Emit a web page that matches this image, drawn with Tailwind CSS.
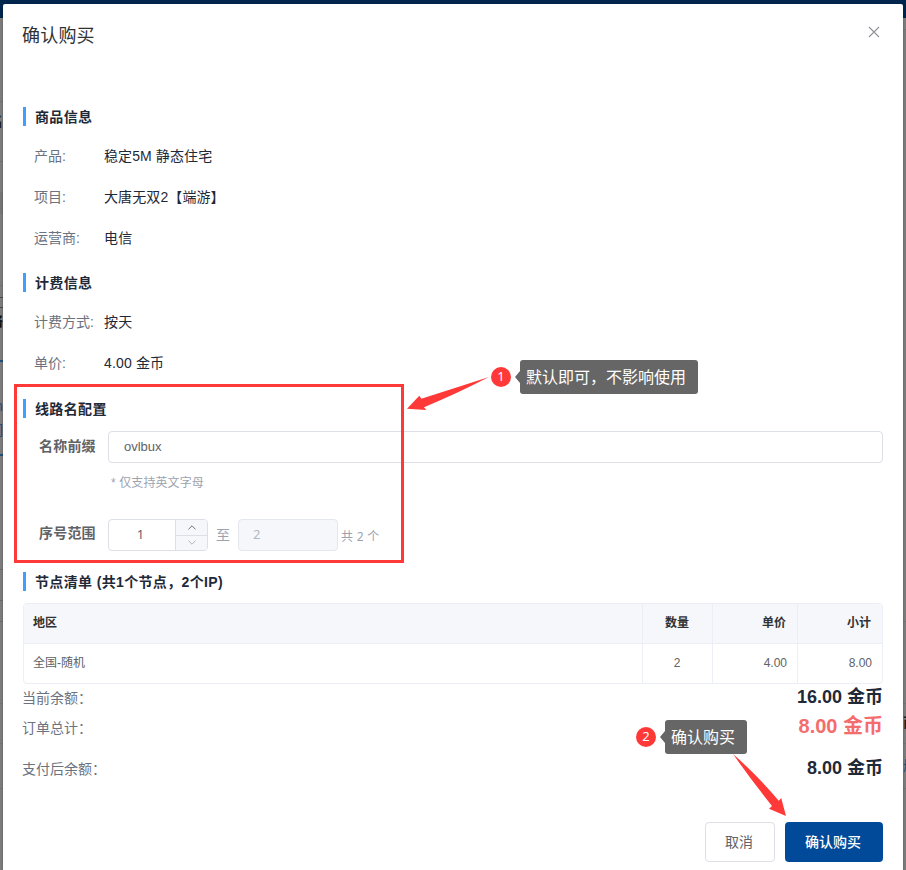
<!DOCTYPE html>
<html lang="zh-CN">
<head>
<meta charset="utf-8">
<title>确认购买</title>
<script src="https://cdn.jsdelivr.net/npm/@tailwindcss/browser@4"></script>
</head>
<body class="relative h-[870px] w-[906px] overflow-hidden bg-[#7e7e7e] font-['Liberation_Sans','Noto_Sans_CJK_SC',sans-serif] text-sm text-[#606266]">
<!-- dimmed page behind the dialog -->
<div class="absolute inset-x-0 top-0 h-[18px] bg-[#00264d]"></div>
<div class="absolute left-0 top-[18px] h-[852px] w-[3px] overflow-hidden">
  <div class="absolute top-[83px] h-px w-full bg-[#747474]"></div>
  <div class="absolute top-[93px] -left-[11px] text-sm font-bold leading-5 text-[#1b1b22]">名</div>
  <div class="absolute top-[143px] h-px w-full bg-[#747474]"></div>
  <div class="absolute top-[174px] h-[22px] w-full bg-[#777]"></div>
  <div class="absolute top-[267px] h-px w-full bg-[#747474]"></div>
  <div class="absolute top-[279px] h-[11px] w-full border-y border-[#4b4b4b]"></div>
  <div class="absolute top-[293px] -left-[11px] text-sm font-bold leading-5 text-[#111]">络</div>
  <div class="absolute top-[342px] h-[2px] w-full bg-[#204f80]"></div>
  <div class="absolute top-[378px] -left-[5px] text-sm leading-5 text-[#204f80]">n</div>
  <div class="absolute top-[402px] -left-[11px] text-sm leading-5 text-[#204f80]">们</div>
  <div class="absolute top-[436px] h-[2px] w-full bg-[#204f80]"></div>
  <div class="absolute top-[551px] h-px w-full bg-[#6c6c6c]"></div>
  <div class="absolute top-[582px] h-px w-full bg-[#6c6c6c]"></div>
  <div class="absolute top-[603px] h-px w-full bg-[#6c6c6c]"></div>
  <div class="absolute top-[685px] h-px w-full bg-[#747474]"></div>
  <div class="absolute top-[725px] h-px w-full bg-[#747474]"></div>
  <div class="absolute top-[770px] h-px w-full bg-[#747474]"></div>
</div>
<div class="absolute left-[903px] top-[18px] h-[852px] w-[3px] overflow-hidden">
  <div class="absolute top-[11px] h-px w-full bg-[#747474]"></div>
  <div class="absolute top-[603px] h-px w-full bg-[#747474]"></div>
  <div class="absolute top-[685px] h-px w-full bg-[#747474]"></div>
  <div class="absolute top-[694px] left-0 text-sm font-bold leading-5 text-[#1b1b22]">商</div>
  <div class="absolute top-[725px] h-px w-full bg-[#747474]"></div>
  <div class="absolute top-[737px] left-0 text-sm leading-5 text-[#204f80]">册</div>
  <div class="absolute top-[770px] h-px w-full bg-[#747474]"></div>
</div>

<!-- dialog -->
<main class="relative ml-[3px] h-[870px] w-[900px] pt-1">
 <div class="h-[866px] rounded-t-[2px] bg-white px-5 shadow-[0_1px_3px_rgba(0,0,0,0.3)]">
  <header class="flex h-[103px] items-start justify-between">
    <h1 class="pt-[17px] -ml-px text-lg leading-[30px] tracking-[0.2px] text-[#303133]">确认购买</h1>
    <svg class="mt-[22px] mr-[3px] size-3" viewBox="0 0 12 12" fill="none" stroke="#909399" stroke-width="1.1"><path d="M1 1L11 11M11 1L1 11"/></svg>
  </header>

  <h2 class="flex h-[19px] items-center border-l-3 border-[#409eff] pl-[9px] pt-px font-bold tracking-[0.35px] text-[#1f2937]">商品信息</h2>
  <dl class="mt-[9px] grid grid-cols-[70px_auto] auto-rows-[41px] items-center pl-[11px] text-[#1f2937]">
    <dt class="text-[#6b7280]">产品:</dt><dd class="tracking-[0.1px]">稳定5M 静态住宅</dd>
    <dt class="text-[#6b7280]">项目:</dt><dd class="tracking-[0.1px]">大唐无双2【端游】</dd>
    <dt class="text-[#6b7280]">运营商:</dt><dd class="tracking-[0.3px]">电信</dd>
  </dl>

  <h2 class="mt-[15px] flex h-[19px] items-center border-l-3 border-[#409eff] pl-[9px] pt-px font-bold tracking-[0.35px] text-[#1f2937]">计费信息</h2>
  <dl class="mt-[9px] grid grid-cols-[70px_auto] auto-rows-[41px] items-center pl-[11px] text-[#1f2937]">
    <dt class="text-[#6b7280]">计费方式:</dt><dd class="tracking-[0.3px]">按天</dd>
    <dt class="text-[#6b7280]">单价:</dt><dd class="tracking-[0.15px]">4.00 金币</dd>
  </dl>

  <h2 class="mt-4 flex h-[19px] items-center border-l-3 border-[#409eff] pl-[9px] pt-px font-bold tracking-[0.35px] text-[#1f2937]">线路名配置</h2>
  <div class="mt-[13px] flex h-8 items-center pl-4">
    <label class="w-[69px] pb-[3px] font-bold tracking-[0.2px]">名称前缀</label>
    <div class="flex h-8 flex-1 items-center rounded border border-[#dcdfe6] pl-[15px] text-[13px]">ovlbux</div>
  </div>
  <p class="mt-[10px] h-5 pl-[88px] text-xs leading-5 tracking-[0.1px] text-[#9ca3af]">* 仅支持英文字母</p>
  <div class="mt-[26px] flex h-8 items-center pl-4">
    <label class="w-[69px] pb-[5px] font-bold tracking-[0.2px]">序号范围</label>
    <div class="flex h-8 w-[100px] overflow-hidden rounded border border-[#dcdfe6]">
      <div class="flex flex-1 items-center justify-center pr-[3px] pb-0.5 font-['Noto_Sans','Noto_Sans_CJK_SC',sans-serif] text-[13px]">1</div>
      <div class="w-8 border-l border-[#dcdfe6] bg-[#f5f7fa]">
        <div class="flex h-4 items-center justify-center border-b border-[#dcdfe6]"><svg class="h-[5px] w-2" viewBox="0 0 8 5" fill="none" stroke="#606266" stroke-width="0.9"><path d="M.4 4.4L4 .8L7.6 4.4"/></svg></div>
        <div class="flex h-[13px] items-center justify-center"><svg class="h-[5px] w-2" viewBox="0 0 8 5" fill="none" stroke="#a8abb2" stroke-width="0.9"><path d="M.4 .6L4 4.2L7.6 .6"/></svg></div>
      </div>
    </div>
    <span class="ml-2 w-[22px] text-[#9ca3af]">至</span>
    <div class="flex h-8 w-[100px] items-center rounded border border-[#e4e7ed] bg-[#f5f7fa] px-[14px] pb-0.5 font-['Noto_Sans',sans-serif] text-[13px] text-[#b4b8c0]">2</div>
    <span class="ml-[3px] pt-1 font-['Noto_Sans','Noto_Sans_CJK_SC',sans-serif] text-xs tracking-[0.3px] text-[#9ca3af]">共 2 个</span>
  </div>

  <h2 class="mt-[21px] flex h-[19px] items-center border-l-3 border-[#409eff] pl-[9px] pt-px font-bold tracking-[0.35px] text-[#1f2937]">节点清单 (共1个节点，2个IP)</h2>
  <div class="mt-3 h-[81px] overflow-hidden rounded border border-[#ebeef5] text-xs">
    <div class="grid h-10 grid-cols-[619px_70px_85px_84px] border-b border-[#ebeef5] bg-[#f5f7fa] pb-px font-bold text-[#303133]">
      <div class="-mb-px flex items-center border-r border-[#ebeef5] pb-0.5 pl-[9px]">地区</div>
      <div class="-mb-px flex items-center justify-center border-r border-[#ebeef5] pb-0.5 pr-px">数量</div>
      <div class="-mb-px flex items-center justify-end border-r border-[#ebeef5] pb-0.5 pr-[11px]">单价</div>
      <div class="-mb-px flex items-center justify-end pb-0.5 pr-[11px]">小计</div>
    </div>
    <div class="grid h-[39px] grid-cols-[619px_70px_85px_84px]">
      <div class="flex items-center border-r border-[#ebeef5] pb-0.5 pl-[9px]">全国-随机</div>
      <div class="flex items-center justify-center border-r border-[#ebeef5] pb-0.5 pr-px">2</div>
      <div class="flex items-center justify-end border-r border-[#ebeef5] pb-0.5 pr-[10px]">4.00</div>
      <div class="flex items-center justify-end pb-0.5 pr-[10px]">8.00</div>
    </div>
  </div>
  <div class="-ml-px flex h-[28px] items-center justify-between text-[#6b7280]"><span>当前余额：</span><b class="pb-0.5 text-lg leading-6 text-[#1f2937]">16.00 金币</b></div>
  <div class="-ml-px flex h-[33px] items-center justify-between text-[#6b7280]"><span class="pb-0.5">订单总计：</span><b class="pb-[5px] text-xl leading-6 text-[#f56c6c]">8.00 金币</b></div>
  <div class="-ml-px mt-2 flex h-[32px] items-center justify-between text-[#6b7280]"><span>支付后余额：</span><b class="pb-0.5 text-lg leading-6 text-[#1f2937]">8.00 金币</b></div>

  <footer class="mt-[37px] flex justify-end gap-[10px]">
    <button class="h-10 w-[70px] rounded border border-[#dcdfe6] bg-white pr-0.5">取消</button>
    <button class="h-10 w-[98px] rounded bg-[#004a99] pr-0.5 font-medium text-white">确认购买</button>
  </footer>
 </div>
</main>

<!-- annotations -->
<div class="absolute left-[14px] top-[384px] h-[179px] w-[390px] border-3 border-[#ff3838]"></div>
<svg class="absolute left-0 top-0 h-[870px] w-[906px]" viewBox="0 0 906 870">
  <g fill="#ff3838">
    <path d="M489 377Q456 394 424 407.200L426.300 410L407 408.700L419.300 395.800L421.300 398.800Q455 388 489 377Z"/>
    <path d="M733 754Q757 775 778.800 800.800L781.200 798L786 816L769 808.700L772 806Q752 781 733 754Z"/>
    <circle cx="501" cy="377" r="10"/>
    <circle cx="646" cy="737" r="10"/>
  </g>
  <path fill="#666" d="M515 377L520 371V383ZM660 737L665 731V743Z"/>
</svg>
<span class="absolute left-[491px] top-[366px] w-5 text-center font-['Noto_Sans'] text-[13px] leading-5 text-white">1</span>
<span class="absolute left-[636px] top-[726px] w-5 text-center font-['Noto_Sans'] text-[13px] leading-5 text-white">2</span>
<div class="absolute left-[520px] top-[360px] flex h-[34px] w-[178px] items-center rounded-[3px] bg-[#666] pt-0.5 pl-[6px] text-base text-white">默认即可，不影响使用</div>
<div class="absolute left-[665px] top-[720px] flex h-[34px] w-[82px] items-center rounded-[3px] bg-[#666] pt-0.5 pl-[6px] text-base text-white">确认购买</div>
</body>
</html>
